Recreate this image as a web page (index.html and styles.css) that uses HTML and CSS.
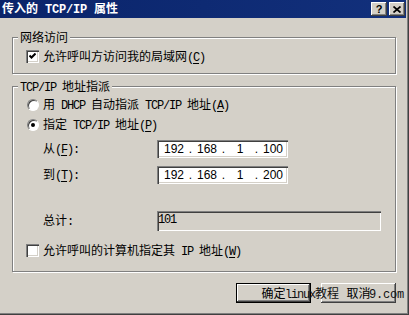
FILE: index.html
```html
<!DOCTYPE html>
<html lang="zh-CN">
<head>
<meta charset="utf-8">
<title>传入的 TCP/IP 属性</title>
<link rel="stylesheet" href="styles.css">
</head>
<body>
<div class="window">
  <div class="titlebar">
    <span class="title">传入的<span class="en"> TCP/IP </span>属性</span>
    <div class="caption-btns">
      <span class="cbtn help">?</span>
      <span class="cbtn close"><svg width="8" height="7" viewBox="0 0 8 7"><path d="M0.5 0.5L7.5 6.5M7.5 0.5L0.5 6.5" stroke="#000" stroke-width="1.7" fill="none"/></svg></span>
    </div>
  </div>

  <fieldset class="group group-access">
    <legend>网络访问</legend>
    <div class="row row-check">
      <span class="check"><svg width="7" height="7" viewBox="0 0 7 7"><path d="M0.5 2.5L2.5 4.5L6.5 0.5" stroke="#000" stroke-width="2" fill="none"/></svg></span>
      <span class="label">允许呼叫方访问我的局域网<span class="en">(<u>C</u>)</span></span>
    </div>
  </fieldset>

  <fieldset class="group group-assign">
    <legend><span class="en">TCP/IP </span>地址指派</legend>
    <div class="row row-radio first">
      <span class="radio"></span>
      <span class="label">用<span class="en"> DHCP </span>自动指派<span class="en"> TCP/IP </span>地址<span class="en">(<u>A</u>)</span></span>
    </div>
    <div class="row row-radio">
      <span class="radio on"></span>
      <span class="label">指定<span class="en"> TCP/IP </span>地址<span class="en">(<u>P</u>)</span></span>
    </div>
    <div class="row row-field first-field">
      <span class="field-label">从<span class="en">(<u>F</u>):</span></span>
      <div class="ip">
        <span class="oct">192</span><span class="dot">.</span><span class="oct">168</span><span class="dot">.</span><span class="oct">1</span><span class="dot">.</span><span class="oct">100</span>
      </div>
    </div>
    <div class="row row-field">
      <span class="field-label">到<span class="en">(<u>T</u>):</span></span>
      <div class="ip">
        <span class="oct">192</span><span class="dot">.</span><span class="oct">168</span><span class="dot">.</span><span class="oct">1</span><span class="dot">.</span><span class="oct">200</span>
      </div>
    </div>
    <div class="row row-total">
      <span class="field-label">总计<span class="en">:</span></span>
      <div class="total"><span class="en">101</span></div>
    </div>
    <div class="row row-check last">
      <span class="check empty"></span>
      <span class="label">允许呼叫的计算机指定其<span class="en"> IP </span>地址<span class="en">(<u>W</u>)</span></span>
    </div>
  </fieldset>

  <div class="buttons">
    <span class="btn default">确定</span>
    <span class="btn">取消</span>
    <span class="watermark wm1"><span class="en">linux</span>教程</span>
    <span class="watermark wm2"><span class="en">9.com</span></span>
  </div>
</div>
</body>
</html>
```

FILE: styles.css
```css
* { box-sizing: border-box; }
html, body { margin: 0; padding: 0; background: #d4d0c8; }
body {
  font-family: "Noto Sans CJK SC", "Noto Sans", sans-serif;
  font-size: 12px;
  line-height: 14px;
  color: #000;
}
.en {
  font-family: "Liberation Mono", "Noto Sans CJK SC", monospace;
  letter-spacing: -1.2px;
}
u { text-decoration-thickness: 1px; text-underline-offset: 2px; }

.window {
  width: 409px;
  height: 315px;
  background: #d4d0c8;
  padding: 0 3px 3px 0;
  box-shadow: inset -1px -1px 0 #404040, inset -2px -2px 0 #808080;
  display: flex;
  flex-direction: column;
}

.titlebar {
  height: 18px;
  flex: none;
  background: linear-gradient(90deg, #0a246a, #12307c);
  display: flex;
  align-items: center;
  padding: 0 1px 0 2px;
  color: #fff;
}
.title {
  flex: 1;
  font-weight: bold;
  font-size: 12px;
  line-height: 16px;
  white-space: nowrap;
}
.title .en { font-weight: bold; letter-spacing: -0.2px; }
.caption-btns { display: flex; gap: 2px; }
.cbtn {
  width: 16px;
  height: 14px;
  background: #d4d0c8;
  box-shadow: inset -1px -1px 0 #404040, inset 1px 1px 0 #fff, inset -2px -2px 0 #808080;
  display: flex;
  align-items: center;
  justify-content: center;
  color: #000;
}
.help {
  font-family: "Liberation Sans", sans-serif;
  font-weight: bold;
  font-size: 11px;
  line-height: 12px;
}

.group {
  border: 1px solid #808080;
  box-shadow: inset 1px 1px 0 #fff, 1px 1px 0 #fff;
  margin: 0 10px 0 12px;
  padding: 0 0 0 13px;
  min-width: 0;
}
.group legend {
  padding: 0 2px;
  margin-left: -8px;
  line-height: 12px;
  height: 12px;
  background: #d4d0c8;
}
.group-access { margin-top: 13px; padding-top: 7px; padding-bottom: 10px; }
.group-assign { margin-top: 6px; padding-top: 6px; padding-bottom: 14px; }

.row { display: flex; align-items: center; white-space: nowrap; }
.row-check { height: 13px; }
.row-radio { height: 14px; margin-top: 6px; }
.row-radio.first { margin-top: 0; }
.row-field { height: 18px; margin-top: 8px; }
.row-total { height: 20px; margin-top: 27px; }
.row-check.last { margin-top: 13px; }

.check {
  width: 13px;
  height: 13px;
  margin-right: 4px;
  background: #fff;
  box-shadow: inset 1px 1px 0 #808080, inset 2px 2px 0 #404040, inset -1px -1px 0 #fff, inset -2px -2px 0 #d4d0c8;
  display: flex;
  align-items: center;
  justify-content: center;
}
.radio {
  width: 12px;
  height: 12px;
  margin: 0 4px 0 1px;
  border-radius: 50%;
  background: #fff;
  border: 1px solid;
  border-color: #808080 #fff #fff #808080;
  box-shadow: inset 1px 1px 0 #404040;
  position: relative;
}
.radio.on::after {
  content: "";
  position: absolute;
  left: 3px;
  top: 3px;
  width: 4px;
  height: 4px;
  border-radius: 50%;
  background: #000;
}
.field-label { width: 131px; padding-left: 17px; }

.ip {
  width: 131px;
  height: 18px;
  background: #fff;
  box-shadow: inset 1px 1px 0 #808080, inset 2px 2px 0 #404040, inset -1px -1px 0 #fff, inset -2px -2px 0 #d4d0c8;
  display: flex;
  align-items: center;
  padding-left: 4px;
  font-family: "Liberation Sans", "DejaVu Sans", sans-serif;
  font-size: 12px;
}
.ip .oct { width: 26px; text-align: center; }
.ip .dot { width: 7px; text-align: center; }

.total {
  width: 224px;
  height: 20px;
  background: #d4d0c8;
  box-shadow: inset 1px 1px 0 #808080, inset 2px 2px 0 #404040, inset -1px -1px 0 #fff, inset -2px -2px 0 #d4d0c8;
  padding: 1px 0 0 1px;
  line-height: 12px;
}

.buttons {
  position: relative;
  display: flex;
  justify-content: flex-end;
  gap: 10px;
  margin-top: 11px;
  padding-right: 10px;
}
.btn {
  width: 75px;
  height: 20px;
  display: flex;
  align-items: center;
  justify-content: center;
  background: #d4d0c8;
  box-shadow: inset -1px -1px 0 #404040, inset 1px 1px 0 #fff, inset -2px -2px 0 #808080;
}
.btn.default {
  border: 1px solid #000;
  box-shadow: inset -1px -1px 0 #404040, inset 1px 1px 0 #fff, inset -2px -2px 0 #808080;
}
.watermark {
  position: absolute;
  top: 3px;
  line-height: 14px;
  color: #111;
}
.wm1 { left: 285px; }
.wm2 { left: 369px; }
.wm2 .en { letter-spacing: -0.2px; }
```
